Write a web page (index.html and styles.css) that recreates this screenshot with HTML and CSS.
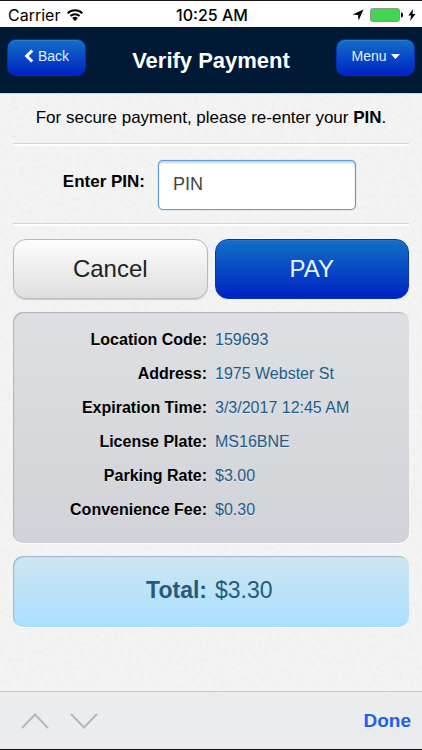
FILE: index.html
```html
<!DOCTYPE html>
<html lang="en">
<head>
<meta charset="utf-8">
<meta name="viewport" content="width=device-width, initial-scale=1">
<title>Verify Payment</title>
<link rel="stylesheet" href="styles.css">
</head>
<body>
<div class="status">
  <div class="status-left">
    <span>Carrier</span>
    <svg width="18" height="14" viewBox="0 0 18 14" aria-hidden="true">
      <path d="M1.700 5.200a10.300 10.300 0 0 1 14.600 0M4.500 8a6.400 6.400 0 0 1 9 0" fill="none" stroke="#000" stroke-width="2"/>
      <path d="M9 13.200 6.200 10.100a4 4 0 0 1 5.600 0z"/>
    </svg>
  </div>
  <time class="clock">10:25 AM</time>
  <div class="status-right">
    <svg class="arrow" width="12" height="12" viewBox="0 0 12 12" aria-hidden="true"><path d="M11.500.5 6.600 11.400 6 6 .5 5.400z"/></svg>
    <svg width="34" height="14" viewBox="0 0 34 14" aria-hidden="true">
      <rect x=".5" y=".5" width="29" height="13" rx="2" fill="#43d551" stroke="#8c9a8c"/>
      <path d="M31 4.500c1.600 0 2 1 2 2.500s-.4 2.500-2 2.500z"/>
    </svg>
    <svg width="8" height="12" viewBox="0 0 8 12" aria-hidden="true"><path d="M5.200 0 .3 6.600h2.900L2 12l5.500-7H4.400z"/></svg>
  </div>
</div>
<header class="topbar">
  <button class="nav-btn" type="button">
    <svg width="10" height="14" viewBox="0 0 10 14" aria-hidden="true"><path d="M8.200 1.500 2.700 7l5.500 5.500" fill="none" stroke="#fff" stroke-width="3"/></svg>
    Back
  </button>
  <h1>Verify Payment</h1>
  <button class="nav-btn" type="button">
    Menu
    <svg width="9" height="5" viewBox="0 0 9 5" aria-hidden="true"><path d="M0 0h9L4.500 5z" fill="#fff"/></svg>
  </button>
</header>
<main>
  <svg class="paper" aria-hidden="true">
    <filter id="grain" x="0" y="0" width="100%" height="100%">
      <feTurbulence type="fractalNoise" baseFrequency=".25" numOctaves="3" seed="4"/>
      <feColorMatrix values="0 0 0 0 .45  0 0 0 0 .45  0 0 0 0 .45  .16 0 0 0 -.06"/>
    </filter>
    <rect width="100%" height="100%" filter="url(#grain)"/>
  </svg>
  <p class="intro">For secure payment, please re-enter your <strong>PIN</strong>.</p>
  <form>
    <div class="pin-row">
      <label for="pin">Enter PIN:</label>
      <input id="pin" type="password" inputmode="numeric" placeholder="PIN">
    </div>
    <div class="actions">
      <button class="cancel" type="button">Cancel</button>
      <button class="pay" type="submit">PAY</button>
    </div>
  </form>
  <dl class="panel details">
    <dt>Location Code:</dt><dd>159693</dd>
    <dt>Address:</dt><dd>1975 Webster St</dd>
    <dt>Expiration Time:</dt><dd>3/3/2017 12:45 AM</dd>
    <dt>License Plate:</dt><dd>MS16BNE</dd>
    <dt>Parking Rate:</dt><dd>$3.00</dd>
    <dt>Convenience Fee:</dt><dd>$0.30</dd>
  </dl>
  <dl class="panel total">
    <dt>Total:</dt><dd>$3.30</dd>
  </dl>
</main>
<footer class="accessory">
  <button type="button" aria-label="Previous field"><svg width="28" height="16" viewBox="0 0 28 16" aria-hidden="true"><path d="M1 15 14 1.500 27 15"/></svg></button>
  <button type="button" aria-label="Next field"><svg width="28" height="16" viewBox="0 0 28 16" aria-hidden="true"><path d="M1 1l13 13.500L27 1"/></svg></button>
  <button class="done" type="button">Done</button>
</footer>
</body>
</html>
```
FILE: styles.css
```css
* {
  box-sizing: border-box;
}

body {
  margin: 0;
  min-height: 100vh;
  display: flex;
  flex-direction: column;
  font-family: "Liberation Sans", Arial, sans-serif;
  color: #000;
  background: #f4f4f4;
  border-top: 1px solid #161419;
  border-bottom: 1px solid #161419;
}

button,
input {
  font-family: inherit;
}

.status {
  display: grid;
  grid-template-columns: 1fr auto 1fr;
  align-items: center;
  height: 26px;
  padding: 2px 6px 0 8px;
  background: #fff;
  font-family: Inter, sans-serif;
  font-size: 16px;
}

.status-left,
.status-right {
  display: flex;
  align-items: center;
  gap: 6px;
}

.status-right {
  justify-content: flex-end;
  gap: 4px;
}

.arrow {
  margin-right: 2px;
}

.clock {
  font-weight: 500;
}

.topbar {
  display: flex;
  justify-content: space-between;
  align-items: flex-start;
  height: 66px;
  padding: 12px 7px;
  background: #001a36;
}

.topbar h1 {
  margin: 8px 0 0;
  font-size: 22px;
  line-height: 28px;
  color: #fff;
}

.nav-btn {
  display: flex;
  align-items: center;
  justify-content: center;
  gap: 4px;
  width: 79px;
  height: 37px;
  padding: 0 0 3px;
  border: 1px solid #0530b8;
  border-radius: 9px;
  background: linear-gradient(#126fc4, #0022c4);
  box-shadow: inset 0 1px 0 #2b7cd0;
  font-size: 14px;
  color: #e4effc;
}

main {
  position: relative;
  z-index: 0;
  flex: 1;
  padding: 0 13px 24px;
  border-top: 1px solid #d0d5dc;
}

.paper {
  position: absolute;
  inset: 0;
  z-index: -1;
  width: 100%;
  height: 100%;
}

.intro {
  margin: 0;
  padding: 14px 0 15px;
  font-size: 17px;
  line-height: 20px;
  text-align: center;
}

.pin-row {
  display: grid;
  grid-template-columns: 132px 198px;
  align-items: center;
  gap: 13px;
  height: 81px;
  padding-top: 2px;
  border-top: 1px solid #d4d4d4;
  border-bottom: 1px solid #d4d4d4;
  box-shadow: inset 0 2px 0 #fff, 0 2px 0 #fff;
}

.pin-row label {
  padding-bottom: 6px;
  font-size: 17px;
  font-weight: bold;
  text-align: right;
}

.pin-row input {
  height: 50px;
  padding: 0 14px;
  border: 1px solid #5c9bd8;
  border-radius: 5px;
  outline: 0;
  background: #fff;
  box-shadow: inset 0 2px 2px #ccd3dc, 0 0 1px #5c9bd8;
  font-size: 18px;
}

.pin-row input::placeholder {
  color: #444;
}

.actions {
  display: grid;
  grid-template-columns: 1fr 1fr;
  gap: 7px;
  margin: 15px 0 13px;
}

.actions button {
  height: 60px;
  border-radius: 13px;
  font-size: 24px;
}

.cancel {
  border: 1px solid #b8b8b8;
  background: linear-gradient(#fdfdfd, #dedede);
  box-shadow: 0 1px 1px #ccc;
  color: #222;
}

.pay {
  border: 1px solid #0830b8;
  background: linear-gradient(#1070c4, #0022c4);
  box-shadow: inset 0 1px 0 #2a78cc;
  color: #eaf4ff;
}

.panel {
  display: grid;
  grid-template-columns: 194px 1fr;
  column-gap: 8px;
  margin: 0;
  border-radius: 10px;
}

.panel dt {
  font-weight: bold;
  text-align: right;
}

.panel dd {
  margin: 0;
}

.details {
  padding: 11px 0 16px;
  background: linear-gradient(#dedfe2, #d2d3d8);
  box-shadow: inset 1px 1px 1px #b0b1b6, 0 1px 1px #fff;
  font-size: 16px;
  line-height: 34px;
  text-shadow: 0 1px 0 #e8e8e8;
}

.details dd {
  color: #1d5c8a;
}

.total {
  margin-top: 13px;
  padding: 18px 0 20px;
  background: linear-gradient(#cde6f1, #aadfff);
  box-shadow: inset 1px 1px 1px #9db6c4, 0 1px 1px #fff;
  font-size: 23px;
  line-height: 33px;
  color: #265a7b;
}

.accessory {
  display: flex;
  align-items: center;
  gap: 21px;
  height: 58px;
  padding: 0 11px 0 21px;
  border-top: 1px solid #c5c9cb;
  background: #ebecee;
}

.accessory button {
  padding: 0;
  border: 0;
  background: none;
  line-height: 0;
}

.accessory path {
  fill: none;
  stroke: #b5b7ba;
  stroke-width: 2;
}

.accessory .done {
  margin-left: auto;
  font-size: 19px;
  font-weight: bold;
  line-height: 24px;
  color: #1b63e8;
}
```
